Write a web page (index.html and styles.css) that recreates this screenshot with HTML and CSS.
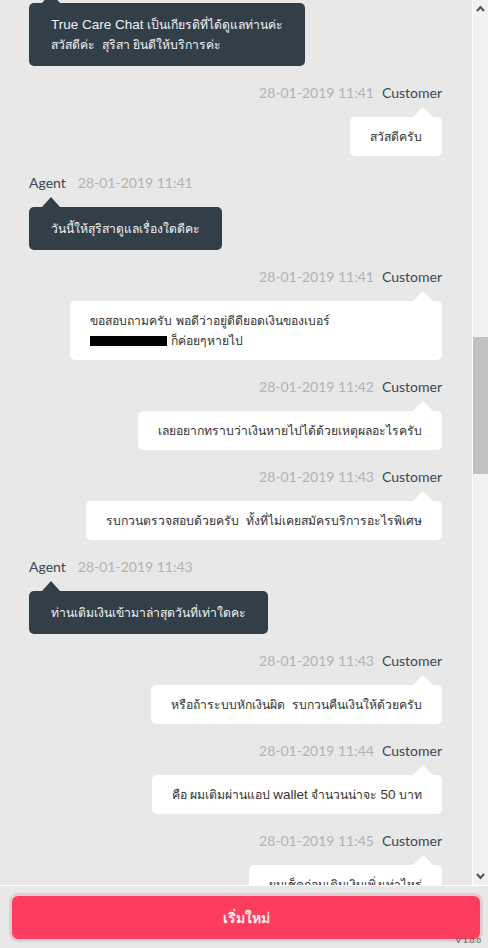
FILE: index.html
```html
<!DOCTYPE html>
<html lang="th">
<head>
  <meta charset="UTF-8" />
  <meta name="viewport" content="width=device-width, initial-scale=1.0"/>
  <title>True Care Chat</title>
  <link rel="stylesheet" href="styles.css">
</head>
<body>
  <div class="app">
    <div class="chat-area">
      <div class="messages">
        <div class="chat-list">
          <!-- agent greeting -->
          <div class="msg agent">
            <div class="msg-head"><span class="name">Agent</span><span class="time">28-01-2019 11:41</span></div>
            <div class="bubble"><span class="en">True Care Chat</span> เป็นเกียรติที่ได้ดูแลท่านค่ะ<br>สวัสดีค่ะ&nbsp; สุริสา ยินดีให้บริการค่ะ</div>
          </div>

          <div class="msg customer">
            <div class="msg-head"><span class="time">28-01-2019 11:41</span><span class="name">Customer</span></div>
            <div class="bubble">สวัสดีครับ</div>
          </div>

          <div class="msg agent">
            <div class="msg-head"><span class="name">Agent</span><span class="time">28-01-2019 11:41</span></div>
            <div class="bubble">วันนี้ให้สุริสาดูแลเรื่องใดดีคะ</div>
          </div>

          <div class="msg customer">
            <div class="msg-head"><span class="time">28-01-2019 11:41</span><span class="name">Customer</span></div>
            <div class="bubble">ขอสอบถามครับ พอดีว่าอยู่ดีดียอดเงินของเบอร์ <span class="nowrap"><span class="redacted"></span> ก็ค่อยๆหายไป</span></div>
          </div>

          <div class="msg customer">
            <div class="msg-head"><span class="time">28-01-2019 11:42</span><span class="name">Customer</span></div>
            <div class="bubble">เลยอยากทราบว่าเงินหายไปได้ด้วยเหตุผลอะไรครับ</div>
          </div>

          <div class="msg customer">
            <div class="msg-head"><span class="time">28-01-2019 11:43</span><span class="name">Customer</span></div>
            <div class="bubble">รบกวนตรวจสอบด้วยครับ&nbsp; ทั้งที่ไม่เคยสมัครบริการอะไรพิเศษ</div>
          </div>

          <div class="msg agent">
            <div class="msg-head"><span class="name">Agent</span><span class="time">28-01-2019 11:43</span></div>
            <div class="bubble">ท่านเติมเงินเข้ามาล่าสุดวันที่เท่าใดคะ</div>
          </div>

          <div class="msg customer">
            <div class="msg-head"><span class="time">28-01-2019 11:43</span><span class="name">Customer</span></div>
            <div class="bubble">หรือถ้าระบบหักเงินผิด&nbsp; รบกวนคืนเงินให้ด้วยครับ</div>
          </div>

          <div class="msg customer">
            <div class="msg-head"><span class="time">28-01-2019 11:44</span><span class="name">Customer</span></div>
            <div class="bubble">คือ ผมเติมผ่านแอป <span class="en">wallet</span> จำนวนน่าจะ <span class="en">50</span> บาท</div>
          </div>

          <div class="msg customer">
            <div class="msg-head"><span class="time">28-01-2019 11:45</span><span class="name">Customer</span></div>
            <div class="bubble">ผมเช็คก่อนเติมเงินเพิ่งเท่าไหร่</div>
          </div>
        </div>
      </div>

      <!-- scrollbar -->
      <div class="scrollbar">
        <div class="sb-button">
          <svg width="9" height="7" viewBox="0 0 9 7"><polyline points="1,6 4.5,2 8,6" fill="none" stroke="#505050" stroke-width="2"/></svg>
        </div>
        <div class="sb-track">
          <div class="sb-thumb"></div>
        </div>
        <div class="sb-button">
          <svg width="9" height="7" viewBox="0 0 9 7"><polyline points="1,1 4.5,5 8,1" fill="none" stroke="#505050" stroke-width="2"/></svg>
        </div>
      </div>
    </div>

    <div class="footer">
      <button class="restart-btn">เริ่มใหม่</button>
      <span class="version">V 1.0.0</span>
    </div>
  </div>
</body>
</html>
```

FILE: styles.css
```css
body {
  margin: 0;
  padding: 0;
  background-color: #e8e8e8;
  font-family: 'Liberation Sans', 'Noto Sans', sans-serif;
}

.app {
  height: 948px;
  display: flex;
  flex-direction: column;
  overflow: hidden;
}

.chat-area {
  height: 885px;
  display: flex;
  background-color: #e8e8e8;
}

.messages {
  flex: 1;
  overflow: hidden;
  border-right: 1px solid #fff;
}

.chat-list {
  margin-top: -32px;
  padding: 0 30px 0 29px;
  display: flex;
  flex-direction: column;
}

.msg {
  display: flex;
  flex-direction: column;
  margin-bottom: 16px;
}

.msg.customer {
  align-items: flex-end;
}

.msg.agent {
  align-items: flex-start;
}

.msg-head {
  display: flex;
  align-items: center;
  height: 20px;
  margin-bottom: 15px;
  font-family: 'Lato', sans-serif;
  font-size: 14px;
}

.msg-head .time {
  color: #b3b3b3;
}

.msg-head .name {
  color: #3c4650;
}

.customer .msg-head .time {
  margin-right: 8px;
}

.agent .msg-head .name {
  margin-right: 12px;
}

.bubble {
  position: relative;
  max-width: 90%;
  box-sizing: border-box;
  font-size: 12.2px;
  line-height: 20px;
  border-radius: 5px;
}

.bubble .en {
  font-size: 13.5px;
  line-height: 1;
}

.bubble .nowrap {
  white-space: nowrap;
}

.customer .bubble {
  background-color: #fff;
  color: #333;
  padding: 9.5px 20px;
}

.agent .bubble {
  background-color: #323e48;
  color: #eef2f5;
  padding: 11.5px 22px;
}

.bubble::before {
  content: "";
  position: absolute;
  top: -10px;
  border-left: 10px solid transparent;
  border-right: 10px solid transparent;
  border-bottom: 10px solid #fff;
}

.customer .bubble::before {
  right: 9px;
}

.agent .bubble::before {
  left: 13px;
  border-left-width: 9px;
  border-right-width: 9px;
  border-bottom-color: #323e48;
}

.redacted {
  display: inline-block;
  width: 77px;
  height: 10px;
  background-color: #000;
  vertical-align: -1px;
}

.scrollbar {
  width: 15px;
  display: flex;
  flex-direction: column;
  background-color: #f1f1f1;
}

.sb-button {
  height: 17px;
  display: flex;
  align-items: center;
  justify-content: center;
}

.sb-track {
  flex: 1;
}

.sb-thumb {
  margin-top: 320px;
  height: 137px;
  background-color: #c1c1c1;
}

.footer {
  position: relative;
  flex: 1;
  border-top: 1px solid #fff;
  padding: 7px 5px 6px 9px;
  display: flex;
}

.restart-btn {
  flex: 1;
  height: 49px;
  border: 3px solid #e4cdd1;
  border-radius: 9px;
  background-color: #fc3d5f;
  color: #f7e9ec;
  font-family: 'Liberation Sans', sans-serif;
  font-size: 14px;
  font-weight: bold;
  cursor: pointer;
}

.version {
  position: absolute;
  right: 7px;
  bottom: 3px;
  font-family: 'Liberation Sans', sans-serif;
  font-size: 8px;
  color: #444;
}
```
